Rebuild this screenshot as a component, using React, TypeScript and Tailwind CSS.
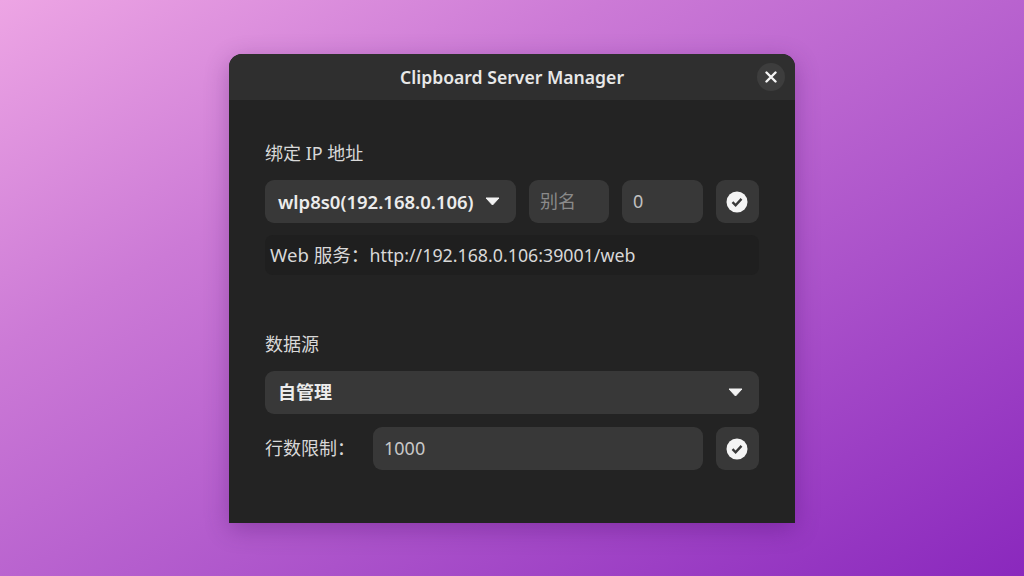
const font = "font-['Noto_Sans','Noto_Sans_CJK_SC',sans-serif]"

function Caret() {
  return (
    <svg width="15" height="9" viewBox="0 0 15 9" className="shrink-0">
      <path d="M1 1h13L7.5 8z" fill="#f2f2f2" stroke="#f2f2f2" strokeWidth="1" strokeLinejoin="round" />
    </svg>
  )
}

function CheckButton() {
  return (
    <button className="flex h-[43px] w-[43px] shrink-0 items-center justify-center rounded-[9px] bg-[#383838] pr-px">
      <svg width="22" height="22" viewBox="0 0 22 22">
        <circle cx="11" cy="11" r="10.5" fill="#f4f4f4" />
        <path d="M6.5 11.2l3.1 3.1 5.9-6.4" fill="none" stroke="#383838" strokeWidth="2.4" />
      </svg>
    </button>
  )
}

export default function App() {
  return (
    <div className={`${font} flex h-[576px] w-[1024px] justify-center overflow-hidden bg-[linear-gradient(150deg,#eda5e4_0%,#cc7ad6_30%,#ab52ca_65%,#8a28bd_100%)] pt-[54px]`}>
      <div className="h-[469px] w-[566px] overflow-hidden rounded-t-[13px] bg-[#232323] text-[18px] text-[#d8d8d8] shadow-[0_6px_24px_rgba(60,0,90,0.3)]">
        <header className="relative flex h-[46px] items-center justify-center bg-[#2f2f2f]">
          <h1 className="text-[17.6px] font-semibold text-[#e8e8e8]">Clipboard Server Manager</h1>
          <button className="absolute right-[10px] top-[9px] flex h-[28px] w-[28px] items-center justify-center rounded-full bg-[#3d3d3d]">
            <svg width="12" height="12" viewBox="0 0 12 12">
              <path d="M1.5 1.5l9 9M10.5 1.5l-9 9" stroke="#f5f5f5" strokeWidth="2.4" strokeLinecap="round" />
            </svg>
          </button>
        </header>

        <main className="flex flex-col px-[36px] pt-[40px]">
          <label className="h-[26px] leading-[26px]">绑定 IP 地址</label>
          <div className="mt-[14px] flex gap-[13px]">
            <div className="flex h-[43px] w-[251px] shrink-0 items-center justify-between rounded-[9px] bg-[#383838] pl-[13px] pr-[16px] font-semibold text-[#ececec]">
              <span className="text-[18.5px]">wlp8s0(192.168.0.106)</span>
              <Caret />
            </div>
            <div className="flex h-[43px] w-[80px] items-center rounded-[9px] bg-[#383838] px-[11px] text-[#8a8a8a]">别名</div>
            <div className="flex h-[43px] w-[81px] items-center rounded-[9px] bg-[#383838] px-[11px] text-[#c0c0c0]">0</div>
            <CheckButton />
          </div>
          <div className="mt-[12px] flex h-[40px] items-center rounded-[8px] bg-[#1f1f1f] px-[5px]">
            <span className="text-[18.6px]">Web 服务：</span>
            <span className="text-[17.8px]">http://192.168.0.106:39001/web</span>
          </div>

          <label className="mt-[56px] h-[26px] leading-[26px]">数据源</label>
          <div className="mt-[14px] flex h-[43px] items-center justify-between rounded-[9px] bg-[#383838] pl-[13px] pr-[16px] font-semibold text-[#ececec]">
            <span>自管理</span>
            <Caret />
          </div>
          <div className="mt-[13px] flex items-center">
            <span className="w-[108px] shrink-0">行数限制：</span>
            <div className="mr-[13px] flex h-[43px] flex-1 items-center rounded-[9px] bg-[#383838] px-[11px] text-[#c8c8c8]">1000</div>
            <CheckButton />
          </div>
        </main>
      </div>
    </div>
  )
}
